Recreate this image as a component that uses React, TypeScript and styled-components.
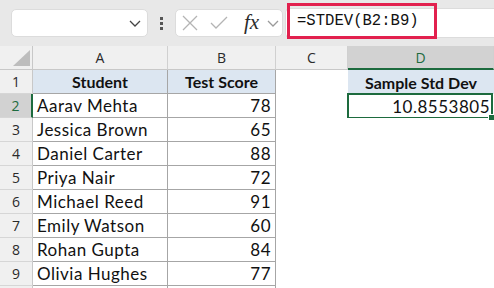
import styled, { createGlobalStyle } from 'styled-components';

const GlobalStyle = createGlobalStyle`
  html, body {
    margin: 0;
    padding: 0;
    background: #ffffff;
    overflow: hidden;
  }
  body {
    width: 494px;
    height: 288px;
  }
`;

const Page = styled.div`
  width: 494px;
  height: 288px;
  overflow: hidden;
  display: flex;
  flex-direction: column;
`;

const Toolbar = styled.div`
  height: 46px;
  flex: none;
  background: #e8e8e8;
  display: flex;
  align-items: center;
  padding-left: 11px;
  box-sizing: border-box;
`;

const NameBox = styled.div`
  width: 137px;
  height: 28px;
  box-sizing: border-box;
  background: #ffffff;
  border: 1px solid #dcdcdc;
  border-radius: 5px;
  display: flex;
  align-items: center;
  justify-content: flex-end;
  padding-right: 6px;
`;

const Grip = styled.div`
  width: 27px;
  display: flex;
  flex-direction: column;
  align-items: center;
  gap: 2px;
  span {
    width: 3px;
    height: 3px;
    background: #555;
  }
`;

const FxButtons = styled.div`
  width: 108px;
  height: 28px;
  box-sizing: border-box;
  background: #ffffff;
  border: 1px solid #dcdcdc;
  border-radius: 5px;
  display: flex;
  align-items: center;
  padding-left: 6px;
`;

const IconSlot = styled.span<{ $gap: number }>`
  display: flex;
  align-items: center;
  margin-right: ${({ $gap }) => $gap}px;
`;

const FxLabel = styled.span`
  font-family: 'Liberation Serif', serif;
  font-style: italic;
  font-size: 21px;
  color: #2b2b2b;
  line-height: 1;
  margin-right: 8px;
  margin-top: -2px;
`;

const FormulaBox = styled.div`
  position: relative;
  flex: 1;
  height: 28px;
  margin-left: 2px;
  background: #ffffff;
  border: 1px solid #dcdcdc;
  border-right: none;
  border-radius: 5px 0 0 5px;
`;

const Highlight = styled.div`
  position: absolute;
  left: 1px;
  top: -6px;
  width: 150px;
  height: 36px;
  box-sizing: border-box;
  border: 3px solid #e2204e;
  display: flex;
  align-items: center;
  padding-left: 7px;
  font-family: 'Liberation Mono', monospace;
  font-size: 15.6px;
  color: #111;
`;

const Sheet = styled.div`
  display: grid;
  grid-template-columns: 33px 135px 108px 72px 1fr;
  grid-auto-rows: 24px;
`;

const ColHead = styled.div<{ $active?: boolean }>`
  box-sizing: border-box;
  background: ${({ $active }) => ($active ? '#d2d2d2' : '#f0f0f0')};
  color: ${({ $active }) => ($active ? '#1d6b3e' : '#2a2a2a')};
  border-right: 1px solid #d0d0d0;
  border-bottom: ${({ $active }) => ($active ? '2px solid #1d6b3e' : '1px solid #c8c8c8')};
  display: flex;
  align-items: center;
  justify-content: center;
  font-family: 'Open Sans', sans-serif;
  font-size: 14px;
`;

const Corner = styled.div`
  box-sizing: border-box;
  background: #f0f0f0;
  border-right: 1px solid #c8c8c8;
  border-bottom: 1px solid #c8c8c8;
  display: flex;
  align-items: flex-end;
  justify-content: flex-end;
  padding: 0 2px 3px 0;
`;

const RowHead = styled.div<{ $active?: boolean }>`
  box-sizing: border-box;
  background: ${({ $active }) => ($active ? '#d2d2d2' : '#f0f0f0')};
  color: ${({ $active }) => ($active ? '#1d6b3e' : '#2a2a2a')};
  border-right: ${({ $active }) => ($active ? '2px solid #1d6b3e' : '1px solid #c8c8c8')};
  border-bottom: 1px solid #d6d6d6;
  display: flex;
  align-items: center;
  justify-content: center;
  font-family: 'Open Sans', sans-serif;
  font-size: 14px;
`;

const Cell = styled.div<{ $head?: boolean; $num?: boolean; $bordered?: boolean }>`
  box-sizing: border-box;
  position: relative;
  background: ${({ $head }) => ($head ? '#dce6f1' : '#ffffff')};
  border-right: ${({ $bordered }) => ($bordered ? '1px solid #a6a6a6' : 'none')};
  border-bottom: ${({ $bordered }) => ($bordered ? '1px solid #a6a6a6' : 'none')};
  display: flex;
  align-items: center;
  justify-content: ${({ $head, $num }) => ($head ? 'center' : $num ? 'flex-end' : 'flex-start')};
  padding: 0 4px;
  font-family: 'Lato', sans-serif;
  font-size: ${({ $head }) => ($head ? 16 : 17)}px;
  letter-spacing: ${({ $head }) => ($head ? 0 : 0.5)}px;
  font-weight: ${({ $head }) => ($head ? 700 : 400)};
  color: #111;
  white-space: nowrap;
`;

const Selected = styled(Cell)`
  &::after {
    content: '';
    position: absolute;
    left: -1px;
    top: -1px;
    right: 1px;
    bottom: -1px;
    border: 2px solid #1d6b3e;
  }
  &::before {
    content: '';
    position: absolute;
    right: -1px;
    bottom: -3px;
    width: 5px;
    height: 5px;
    background: #1d6b3e;
    border: 1px solid #fff;
    z-index: 1;
  }
`;

const students: [string, number][] = [
  ['Aarav Mehta', 78],
  ['Jessica Brown', 65],
  ['Daniel Carter', 88],
  ['Priya Nair', 72],
  ['Michael Reed', 91],
  ['Emily Watson', 60],
  ['Rohan Gupta', 84],
  ['Olivia Hughes', 77],
];

function Chevron({ color = '#444' }: { color?: string }) {
  return (
    <svg width="12" height="7" viewBox="0 0 12 7">
      <path d="M1 1l5 5l5-5" fill="none" stroke={color} strokeWidth="1.3" />
    </svg>
  );
}

function Row({ index, name, score }: { index: number; name: string; score: number }) {
  return (
    <>
      <RowHead $active={index === 2}>{index}</RowHead>
      <Cell $bordered>{name}</Cell>
      <Cell $bordered $num>
        {score}
      </Cell>
      <Cell />
      {index === 2 ? <Selected $num>10.8553805</Selected> : <Cell />}
    </>
  );
}

export default function App() {
  return (
    <Page>
      <GlobalStyle />
      <Toolbar>
        <NameBox>
          <Chevron />
        </NameBox>
        <Grip>
          <span />
          <span />
          <span />
        </Grip>
        <FxButtons>
          <IconSlot $gap={12}>
            <svg width="16" height="16" viewBox="0 0 16 16">
              <path d="M1 1l14 14M15 1L1 15" stroke="#b4b4b4" strokeWidth="1.3" />
            </svg>
          </IconSlot>
          <IconSlot $gap={16}>
            <svg width="18" height="14" viewBox="0 0 18 14">
              <path d="M1 7l5 5L17 1" fill="none" stroke="#b4b4b4" strokeWidth="1.3" />
            </svg>
          </IconSlot>
          <FxLabel>fx</FxLabel>
          <Chevron color="#9a9a9a" />
        </FxButtons>
        <FormulaBox>
          <Highlight>=STDEV(B2:B9)</Highlight>
        </FormulaBox>
      </Toolbar>
      <Sheet>
        <Corner>
          <svg width="17" height="16" viewBox="0 0 17 16">
            <path d="M17 0V16H0Z" fill="#bdbdbd" />
          </svg>
        </Corner>
        <ColHead>A</ColHead>
        <ColHead>B</ColHead>
        <ColHead>C</ColHead>
        <ColHead $active>D</ColHead>

        <RowHead>1</RowHead>
        <Cell $head $bordered>Student</Cell>
        <Cell $head $bordered>Test Score</Cell>
        <Cell />
        <Cell $head>Sample Std Dev</Cell>

        {students.map(([name, score], i) => (
          <Row key={name} index={i + 2} name={name} score={score} />
        ))}

        <RowHead />
        <Cell $bordered />
        <Cell $bordered />
        <Cell />
        <Cell />
      </Sheet>
    </Page>
  );
}
